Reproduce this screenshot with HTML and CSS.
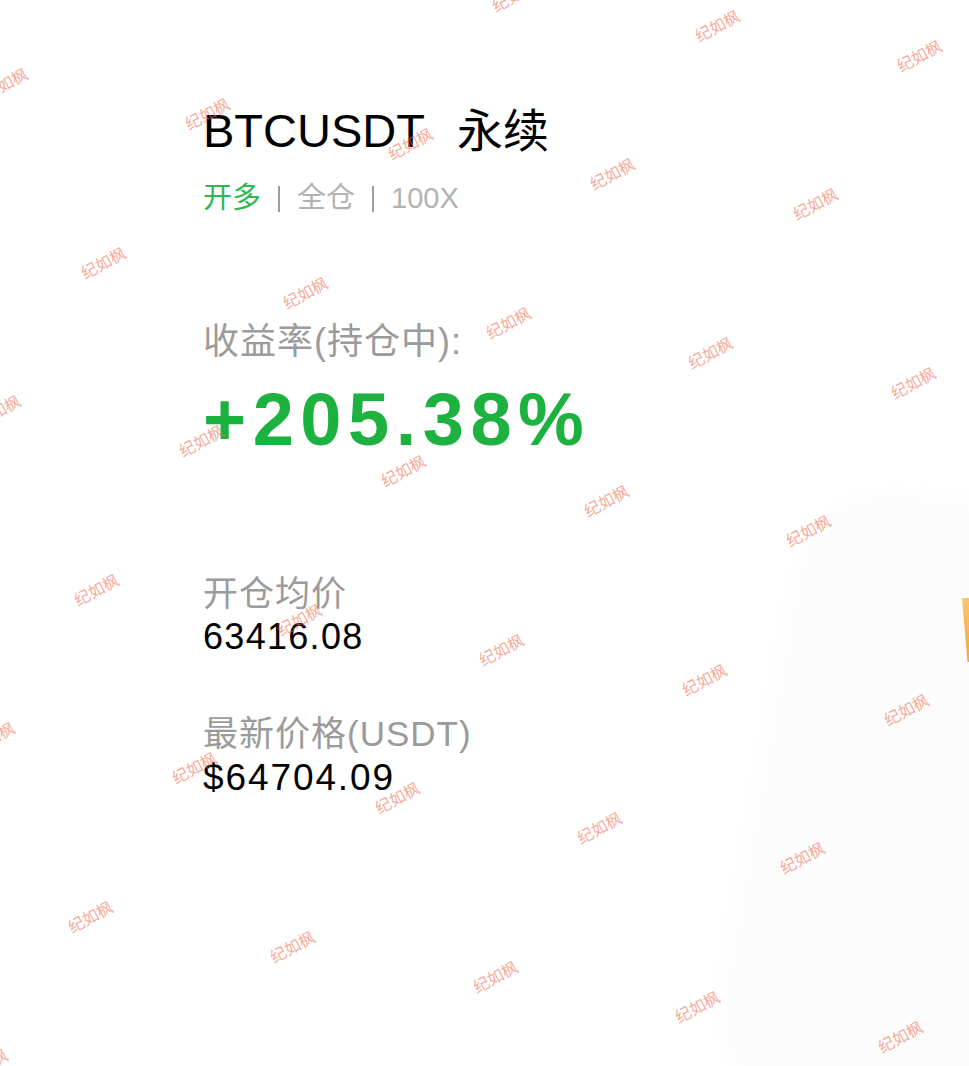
FILE: index.html
```html
<!DOCTYPE html>
<html lang="zh-CN">
<head>
  <meta charset="UTF-8" />
  <title>BTCUSDT 永续</title>
  <link rel="stylesheet" href="styles.css">
</head>
<body>
  <div class="poster">
    <div class="deco">
      <div class="deco-phone"></div>
      <div class="deco-flame"></div>
    </div>

    <div class="info">
      <h1 class="pair">BTCUSDT<span class="pair-type">永续</span></h1>

      <div class="tags">
        <span class="tag tag-long">开多</span>
        <span class="tag-sep"></span>
        <span class="tag">全仓</span>
        <span class="tag-sep"></span>
        <span class="tag">100X</span>
      </div>

      <div class="label label-roi">收益率(持仓中):</div>
      <div class="roi">+205.38%</div>

      <div class="label label-entry">开仓均价</div>
      <div class="price price-entry">63416.08</div>

      <div class="label label-last">最新价格(USDT)</div>
      <div class="price price-last">$64704.09</div>
    </div>

    <div class="watermark" id="watermark"></div>
  </div>

  <script src="watermark.js"></script>
</body>
</html>
```

FILE: styles.css
```css
body {
  margin: 0;
  background: #fff;
  font-family: "Liberation Sans", "Noto Sans CJK SC", sans-serif;
  color: #000;
}

.poster {
  position: relative;
  height: 1066px;
  overflow: hidden;
}

/* faint illustration in the lower right */
.deco {
  position: absolute;
  inset: 0;
  pointer-events: none;
}

.deco-phone {
  position: absolute;
  left: 760px;
  top: 500px;
  width: 300px;
  height: 620px;
  background: #fcfcfc;
  border-radius: 90px;
  transform: rotate(10deg);
  filter: blur(8px);
}

.deco-flame {
  position: absolute;
  left: 962px;
  top: 598px;
  width: 10px;
  height: 64px;
  background: linear-gradient(180deg, #fbc56f, #f6a63a);
  clip-path: polygon(0 0, 100% 0, 100% 100%, 55% 100%);
  filter: blur(0.5px);
}

.info {
  position: relative;
  padding: 107px 0 0 203px;
}

.pair {
  margin: 0;
  font-size: 47px;
  line-height: 47px;
  font-weight: normal;
}

.pair-type {
  margin-left: 32px;
  font-size: 46px;
}

.tags {
  display: flex;
  align-items: center;
  gap: 17px;
  margin-top: 29px;
  height: 29px;
  font-size: 29px;
  line-height: 29px;
  color: #b2b2b2;
}

.tag-long {
  color: #2bb84f;
}

.tag-sep {
  width: 2px;
  height: 26px;
  background: #9c9c9c;
}

.label {
  font-size: 35px;
  line-height: 35px;
  letter-spacing: 1px;
  color: #9b9b9b;
}

.label-roi {
  margin-top: 111px;
  font-size: 36px;
  line-height: 36px;
}

.roi {
  margin-top: 23px;
  font-size: 74px;
  line-height: 74px;
  font-weight: bold;
  letter-spacing: 6.5px;
  color: #1db13f;
}

.label-entry {
  margin-top: 119px;
}

.label-last {
  margin-top: 61px;
}

.price {
  margin-top: 8px;
  font-size: 36px;
  line-height: 36px;
  letter-spacing: 1.3px;
}

.price-last {
  font-size: 37px;
  line-height: 37px;
  letter-spacing: 1.9px;
}

/* repeated name stamp across the whole poster */
.watermark {
  position: absolute;
  inset: 0;
  pointer-events: none;
}

.watermark span {
  position: absolute;
  transform: translate(-50%, -50%) rotate(-28deg);
  font-family: "Noto Sans CJK SC", sans-serif;
  font-size: 16px;
  line-height: 16px;
  white-space: nowrap;
  color: rgba(240, 110, 80, 0.6);
}
```

FILE: watermark.js
```js
// lay the stamp out on a slanted lattice
const layer = document.getElementById('watermark');
const origin = [207, 113];
const stepA = [202.5, 30];
const stepB = [-104.5, 148.5];

for (let j = -2; j <= 9; j++) {
  for (let i = -3; i <= 10; i++) {
    const x = origin[0] + i * stepA[0] + j * stepB[0];
    const y = origin[1] + i * stepA[1] + j * stepB[1];
    if (x < -40 || x > 1010 || y < -20 || y > 1090) continue;
    const mark = document.createElement('span');
    mark.textContent = '纪如枫';
    mark.style.left = x + 'px';
    mark.style.top = y + 'px';
    layer.appendChild(mark);
  }
}
```
